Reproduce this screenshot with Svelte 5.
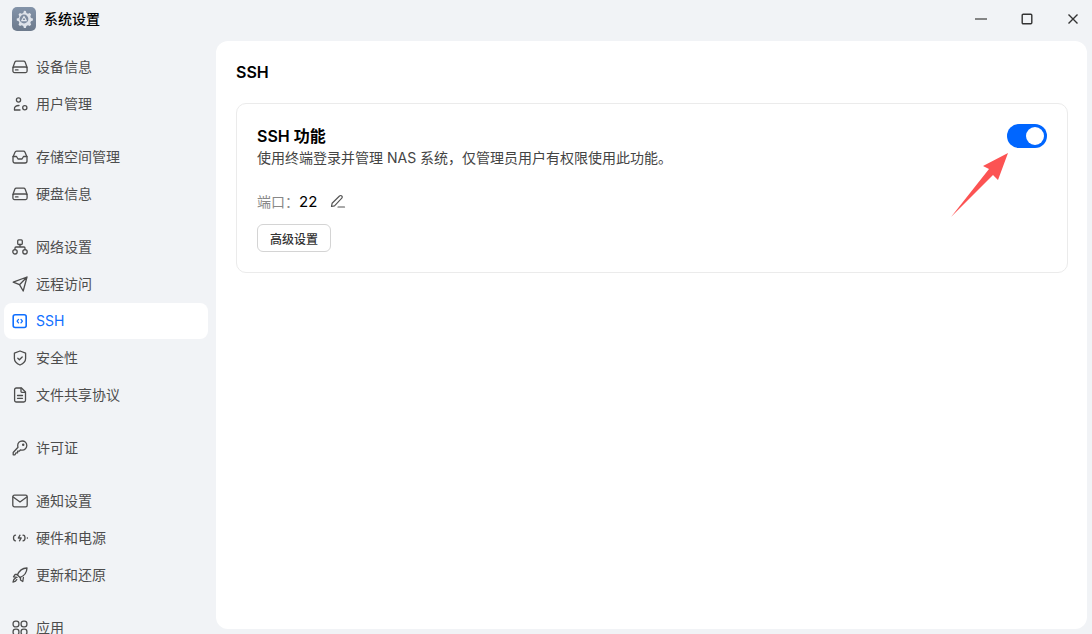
<script lang="ts">
  const groups = [
    [
      { label: '设备信息', icon: 'drive' },
      { label: '用户管理', icon: 'user' }
    ],
    [
      { label: '存储空间管理', icon: 'inbox' },
      { label: '硬盘信息', icon: 'drive' }
    ],
    [
      { label: '网络设置', icon: 'network' },
      { label: '远程访问', icon: 'send' },
      { label: 'SSH', icon: 'code', active: true },
      { label: '安全性', icon: 'shield' },
      { label: '文件共享协议', icon: 'file' }
    ],
    [{ label: '许可证', icon: 'key' }],
    [
      { label: '通知设置', icon: 'mail' },
      { label: '硬件和电源', icon: 'power' },
      { label: '更新和还原', icon: 'rocket' }
    ],
    [{ label: '应用', icon: 'apps' }]
  ];
</script>

<div class="window">
  <header class="titlebar">
    <div class="app-icon">
      <svg viewBox="0 0 24 24" width="22" height="22" fill="none">
        <path d="M12 3l2 .4.6 2.1 1.7.8 2-.8 1.5 1.6-.9 2 .7 1.700 2.100.7v2.200l-2.100.7-.7 1.700.9 2-1.500 1.600-2-.8-1.700.8-.6 2.100h-2.100l-.7-2.100-1.700-.8-2 .8-1.500-1.600.9-2-.7-1.700-2.100-.7v-2.200l2.100-.7.7-1.700-.9-2 1.500-1.600 2 .8 1.700-.8.7-2.100z" fill="#dfe3ea"/>
        <circle cx="12" cy="12" r="4.800" fill="#7f8da1"/>
        <path d="M12 9.200l2.600 4.600H9.400z" stroke="#e4e8ee" stroke-width="1.200" stroke-linejoin="round"/>
      </svg>
    </div>
    <span class="app-name">系统设置</span>
    <div class="win-controls">
      <svg viewBox="0 0 12 12" width="12" height="12"><path d="M0 6h12" stroke="#555" stroke-width="1.400"/></svg>
      <svg viewBox="0 0 12 12" width="12" height="12" fill="none"><rect x="1.200" y="1.200" width="9.600" height="9.600" rx="1" stroke="#333" stroke-width="1.400"/></svg>
      <svg viewBox="0 0 12 12" width="12" height="12"><path d="M1.500 1.500l9 9M10.500 1.500l-9 9" stroke="#333" stroke-width="1.400"/></svg>
    </div>
  </header>

  <div class="body">
    <nav class="sidebar">
      {#each groups as group}
        <div class="group">
          {#each group as item}
            <div class="item" class:active={item.active}>
              <svg class="icon" viewBox="0 0 16 16" width="16" height="16" fill="none" stroke="currentColor" stroke-width="1.300" stroke-linecap="round" stroke-linejoin="round">
                {#if item.icon === 'drive'}
                  <path d="M.9 8.500l2-5.400c.3-.7.8-1 1.400-1h7.400c.6 0 1.100.3 1.400 1l2 5.400"/>
                  <rect x=".9" y="8" width="14.200" height="5.600" rx="1.500"/>
                  <path d="M3.500 10.900h2.500"/>
                {:else if item.icon === 'user'}
                  <circle cx="6.500" cy="4" r="2.100"/>
                  <path d="M2.500 13.500c-.5-2.500 1.500-4 4.500-4"/>
                  <path d="M2.500 14h5.500"/>
                  <circle cx="12.800" cy="11.800" r="2.100"/>
                {:else if item.icon === 'inbox'}
                  <path d="M1 8l2-4.800c.3-.7.8-1.100 1.500-1.100h7c.7 0 1.200.4 1.500 1.100L15 8v4c0 1.200-.8 2-2 2H3c-1.200 0-2-.8-2-2z"/>
                  <path d="M1 7.500h3.500l1.500 2.500h4l1.500-2.500H15"/>
                {:else if item.icon === 'network'}
                  <rect x="5.700" y=".9" width="4.600" height="4.600" rx="1"/>
                  <circle cx="3" cy="12.800" r="2.200"/>
                  <circle cx="13" cy="12.800" r="2.200"/>
                  <path d="M8 5.500V8M3 10.600V9c0-.6.400-1 1-1h8c.6 0 1 .4 1 1v1.600"/>
                {:else if item.icon === 'send'}
                  <path d="M1.200 6.200L15 1 11.200 15 7.500 8.700zM7.500 8.700L15 1"/>
                {:else if item.icon === 'code'}
                  <rect x="1.200" y="1.700" width="13" height="12.800" rx="2" stroke-width="1.600"/>
                  <path d="M6.500 6.400L5.100 8.100l1.400 1.700M9 6.400l1.400 1.700L9 9.800"/>
                {:else if item.icon === 'shield'}
                  <path d="M8 1l5.600 2.200v5.300c0 3-2.400 5.200-5.600 6.500-3.200-1.300-5.600-3.500-5.600-6.500V3.200z"/>
                  <path d="M5.800 8.300l1.600 1.500 2.800-2.800"/>
                {:else if item.icon === 'file'}
                  <path d="M2.600 2.800C2.600 1.700 3.300 1 4.400 1H9.500L13.500 5v8.200c0 1.100-.7 1.800-1.800 1.800H4.400c-1.100 0-1.800-.7-1.800-1.800z"/>
                  <path d="M9 1.200V4.500c0 .5.300.8.800.8h3.500M5.500 8.500h5M5.500 11.300h5"/>
                {:else if item.icon === 'key'}
                  <path d="M10.200 1c2.500 0 4.600 2 4.600 4.500s-2.100 4.600-4.600 4.600c-.6 0-1.100-.1-1.600-.3L7.200 11.200H5.600v1.600H4l-1 2H1.200v-2.300L6 7.200c-.2-.5-.3-1.100-.3-1.700C5.700 3 7.700 1 10.200 1z"/>
                  <circle cx="11.200" cy="4.700" r=".6"/>
                {:else if item.icon === 'mail'}
                  <rect x=".8" y="2.200" width="14.400" height="11.600" rx="1.600"/>
                  <path d="M1.200 4l6.800 5 6.800-5"/>
                {:else if item.icon === 'power'}
                  <path d="M3.500 5.200C2.300 5.200 1.500 6.200 1.500 8s.8 2.800 2 2.800M11 5.200c1.200 0 2 1 2 2.800s-.8 2.800-2 2.800M8 5.200L6.300 8h2.900l-1.700 2.800M15.300 8h.2"/>
                {:else if item.icon === 'rocket'}
                  <path d="M15 1c-4.500.2-7.800 2.500-9.500 7l2.500 2.500c4.500-1.700 6.800-5 7-9.500z"/>
                  <path d="M5.500 7.500H3L1.500 9.800l3.500.6M8.500 10.500V13l2.300 1.500.6-4"/>
                  <path d="M3.500 11.200C2 11.800 1.300 13 1 15c2-.3 3.200-1 3.800-2.500"/>
                {:else if item.icon === 'apps'}
                  <rect x="1.100" y="1.100" width="5.800" height="5.800" rx="2.400"/>
                  <rect x="9.100" y="1.100" width="5.800" height="5.800" rx="2.400"/>
                  <rect x="1.100" y="9.100" width="5.800" height="5.800" rx="2.400"/>
                  <rect x="9.100" y="9.100" width="5.800" height="5.800" rx="2.400"/>
                {/if}
              </svg>
              <span>{item.label}</span>
            </div>
          {/each}
        </div>
      {/each}
    </nav>

    <main class="main">
      <h1>SSH</h1>
      <section class="card">
        <div class="card-head">
          <div>
            <h2>SSH 功能</h2>
            <p>使用终端登录并管理 NAS 系统，仅管理员用户有权限使用此功能。</p>
          </div>
          <div class="toggle"><span class="knob"></span></div>
        </div>
        <div class="port">
          <span class="port-label">端口：</span>
          <span class="port-value">22</span>
          <svg viewBox="0 0 16 16" width="16" height="16" fill="none" stroke="#555" stroke-width="1.200" stroke-linejoin="round">
            <path d="M1.500 13.500l.6-3.200L9.500 3c.7-.7 1.700-.7 2.300 0 .6.600.6 1.600 0 2.200L4.500 12.800z"/>
            <path d="M8 14h6.500" stroke-linecap="round"/>
          </svg>
        </div>
        <button class="btn">高级设置</button>
      </section>
    </main>
  </div>

  <svg class="arrow" viewBox="0 0 70 70" width="70" height="70">
    <path d="M58 0L48 27 43 22 1 64 39 16 33 13z" fill="#fc5353"/>
  </svg>
</div>

<style>
  :global(body) {
    margin: 0;
    overflow: hidden;
  }

  .window {
    position: relative;
    width: 1092px;
    height: 634px;
    overflow: hidden;
    background: #f1f3f6;
    font-family: Inter, "Noto Sans CJK SC", sans-serif;
    color: #333;
  }

  .titlebar {
    display: flex;
    align-items: center;
    height: 41px;
    padding: 0 0 3px 12px;
    box-sizing: border-box;
  }

  .app-icon {
    display: flex;
    align-items: center;
    justify-content: center;
    width: 24px;
    height: 24px;
    border-radius: 5px;
    background: linear-gradient(#8393a9, #6d7a8c);
  }

  .app-name {
    margin-left: 8px;
    padding-bottom: 2px;
    font-size: 14px;
    font-weight: 500;
    color: #000;
  }

  .win-controls {
    display: flex;
    align-items: center;
    gap: 34px;
    margin-left: auto;
    margin-right: 13px;
  }

  .body {
    display: flex;
    height: 588px;
  }

  .sidebar {
    flex: none;
    width: 216px;
    box-sizing: border-box;
    padding: 8px 8px 0 4px;
    display: flex;
    flex-direction: column;
    gap: 17px;
  }

  .group {
    display: flex;
    flex-direction: column;
    gap: 1px;
  }

  .item {
    flex: none;
    display: flex;
    align-items: center;
    gap: 8px;
    height: 36px;
    padding-left: 8px;
    border-radius: 8px;
    font-size: 14px;
    color: #4d4d4d;
  }

  .item span {
    padding-bottom: 2px;
  }

  .item.active {
    background: #fff;
    color: #0f6fff;
  }

  .icon {
    flex: none;
  }

  .main {
    flex: 1;
    margin-right: 5px;
    padding: 0 19px 0 20px;
    background: #fff;
    border-radius: 12px;
  }

  h1 {
    margin: 21px 0 21px;
    font-size: 16px;
    line-height: 20px;
    font-weight: 600;
    color: #000;
  }

  .card {
    height: 170px;
    box-sizing: border-box;
    padding: 20px;
    border: 1px solid #ebebeb;
    border-radius: 10px;
  }

  .card-head {
    display: flex;
    justify-content: space-between;
    height: 57px;
  }

  h2 {
    margin: 0;
    font-size: 16px;
    line-height: 24px;
    font-weight: 600;
    color: #000;
  }

  p {
    margin: 0;
    font-size: 14px;
    line-height: 20px;
    color: #444;
  }

  .toggle {
    width: 40px;
    height: 24px;
    box-sizing: border-box;
    padding: 3px;
    display: flex;
    justify-content: flex-end;
    border-radius: 12px;
    background: #0066ff;
  }

  .knob {
    width: 18px;
    height: 18px;
    border-radius: 50%;
    background: #fff;
  }

  .port {
    display: flex;
    align-items: center;
    height: 24px;
    margin-top: 8px;
  }

  .port-label {
    font-size: 14px;
    color: #888;
  }

  .port-value {
    width: 31px;
    font-size: 15px;
    color: #000;
  }

  .btn {
    display: block;
    width: 74px;
    height: 28px;
    margin-top: 11px;
    padding: 0;
    background: #fff;
    border: 1px solid #d4d4d4;
    border-radius: 6px;
    font: inherit;
    font-size: 12px;
    font-weight: 500;
    color: #333;
  }

  .arrow {
    position: absolute;
    left: 950px;
    top: 153px;
  }
</style>
